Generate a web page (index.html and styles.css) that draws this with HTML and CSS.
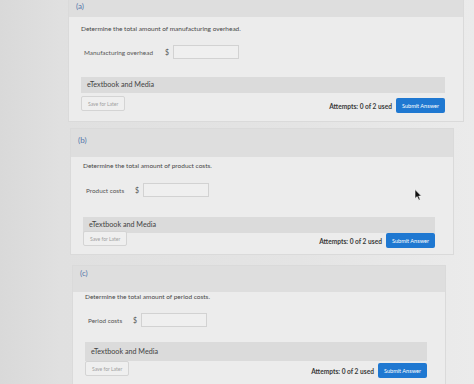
FILE: index.html
```html
<!DOCTYPE html>
<html>
<head>
    <meta charset="utf-8">
    <title>Assignment</title>
    <link rel="stylesheet" href="styles.css">
</head>
<body>
    <div class="page">
        <div class="part part-a">
            <div class="part-head">(a)</div>
            <div class="part-body">
                <div class="prompt">Determine the total amount of manufacturing overhead.</div>
                <div class="answer-row">
                    <label>Manufacturing overhead</label>
                    <span class="currency">$</span>
                    <input type="text" class="answer-input">
                </div>
                <div class="media-bar">eTextbook and Media</div>
                <div class="actions">
                    <button class="button-save">Save for Later</button>
                    <span class="attempts">Attempts: 0 of 2 used</span>
                    <button class="button-submit">Submit Answer</button>
                </div>
            </div>
        </div>

        <div class="part part-b">
            <div class="part-head">(b)</div>
            <div class="part-body">
                <div class="prompt">Determine the total amount of product costs.</div>
                <div class="answer-row">
                    <label>Product costs</label>
                    <span class="currency">$</span>
                    <input type="text" class="answer-input">
                </div>
                <div class="media-bar">eTextbook and Media</div>
                <div class="actions">
                    <button class="button-save">Save for Later</button>
                    <span class="attempts">Attempts: 0 of 2 used</span>
                    <button class="button-submit">Submit Answer</button>
                </div>
            </div>
            <svg class="cursor" width="8" height="12" viewBox="0 0 8 12">
                <path d="M1 0.5 L1 9.5 L3.2 7.6 L4.8 11.2 L6.2 10.6 L4.7 7.1 L7.4 7.1 Z" fill="#111" stroke="#fff" stroke-width="0.6"/>
            </svg>
        </div>

        <div class="part part-c">
            <div class="part-head">(c)</div>
            <div class="part-body">
                <div class="prompt">Determine the total amount of period costs.</div>
                <div class="answer-row">
                    <label>Period costs</label>
                    <span class="currency">$</span>
                    <input type="text" class="answer-input">
                </div>
                <div class="media-bar">eTextbook and Media</div>
                <div class="actions">
                    <button class="button-save">Save for Later</button>
                    <span class="attempts">Attempts: 0 of 2 used</span>
                    <button class="button-submit">Submit Answer</button>
                </div>
            </div>
        </div>
    </div>
</body>
</html>
```

FILE: styles.css
```css
body {
    margin: 0;
    font-family: Lato, "Open Sans", sans-serif;
    background: linear-gradient(to right, #d9d9d9 0, #e0e0e0 60px, #e4e4e4 300px, #ebebeb 474px);
    height: 384px;
    overflow: hidden;
}

.part {
    position: relative;
    background: #ececec;
    border: 1px solid #dadada;
}

.part-head {
    height: 28px;
    padding: 6px 0 0 7px;
    box-sizing: border-box;
    background: #dedede;
    color: #5577aa;
    font-size: 8px;
}

.part-body {
    padding: 5px 18px 6px 12px;
}

.prompt {
    font-size: 6.5px;
    line-height: 8px;
    color: #474747;
}

.answer-row {
    display: flex;
    align-items: center;
    margin: 12px 0 0 3px;
}

.answer-row label {
    font-size: 6.4px;
    color: #555;
}

.currency {
    font-size: 7px;
    color: #555;
    margin-right: 4px;
}

.answer-input {
    width: 66px;
    height: 14px;
    box-sizing: border-box;
    border: 1px solid #d2d2d2;
    background: #efefef;
    padding: 0;
}

.media-bar {
    margin-top: 18px;
    height: 16px;
    padding-left: 6px;
    background: #dbdbdb;
    font-size: 7.2px;
    line-height: 16px;
    color: #444;
}

.actions {
    display: flex;
    align-items: flex-start;
    margin-top: 3px;
}

.button-save {
    height: 15px;
    padding: 0 6px;
    background: #efefef;
    border: 1px solid #d4d4d4;
    border-radius: 2px;
    color: #a0a0a0;
    font-family: inherit;
    font-size: 5px;
}

.attempts {
    margin-left: auto;
    margin-top: 6px;
    font-size: 6.6px;
    font-weight: bold;
    color: #3a3a3a;
}

.button-submit {
    margin-left: 4px;
    margin-top: 2px;
    height: 15px;
    padding: 0 6px;
    background: #1f78d1;
    border: none;
    border-radius: 2px;
    color: #fff;
    font-family: inherit;
    font-size: 5.6px;
}

.part-a {
    margin: -12px 0 0 68px;
    width: 394px;
}

.part-a .part-head {
    padding-top: 12px;
}

.part-a .part-body {
    padding-top: 8px;
    padding-bottom: 8px;
}

.part-a .answer-row label {
    width: 81px;
}

.part-b {
    margin: 6px 0 0 70px;
    width: 382px;
}

.part-b .answer-row {
    margin-top: 13px;
}

.part-b .media-bar {
    margin-top: 20px;
}

.part-b .actions {
    margin-top: -2px;
}

.part-b .answer-row label {
    width: 49px;
}

.part-c {
    margin: 10px 0 0 72px;
    width: 372px;
}

.part-c .part-head {
    height: 26px;
    padding-top: 2px;
}

.part-c .part-body {
    padding-top: 1px;
}

.part-c .answer-row label {
    width: 45px;
}

.part-c .media-bar {
    margin-top: 15px;
    height: 19px;
    line-height: 19px;
}

.part-c .actions {
    margin-top: 0;
}

.cursor {
    position: absolute;
    left: 343px;
    top: 60px;
}
```
